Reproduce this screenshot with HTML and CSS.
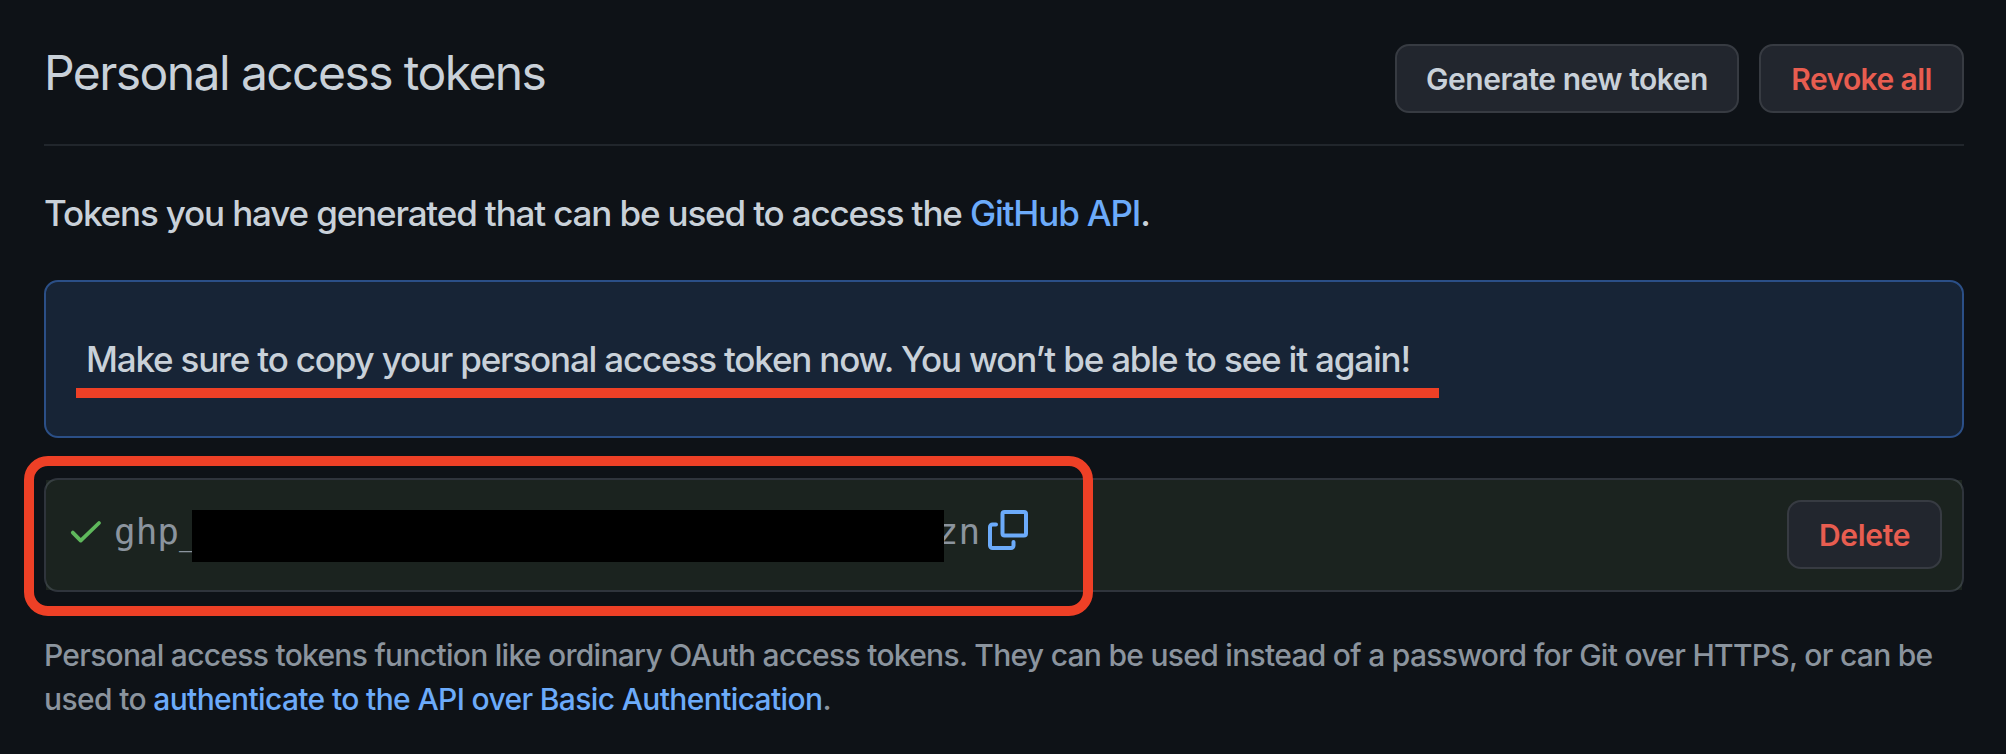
FILE: index.html
```html
<!DOCTYPE html>
<html lang="en">
<head>
<meta charset="utf-8">
<title>Personal access tokens</title>
<link rel="stylesheet" href="styles.css">
</head>
<body>
<main class="page">
  <header class="subhead">
    <h1 class="title">Personal access tokens</h1>
    <div class="actions">
      <button class="btn btn-generate">Generate new token</button>
      <button class="btn btn-danger btn-revoke">Revoke all</button>
    </div>
  </header>
  <p class="intro">Tokens you have generated that can be used to access the <a href="#">GitHub API</a>.</p>
  <section class="flash">
    <p class="flash-text">Make sure to copy your personal access token now. You won’t be able to see it again!</p>
    <div class="underline"></div>
  </section>
  <section class="token">
    <div class="token-fill">
      <svg class="check" viewBox="0 0 32 24" fill="none" stroke="#5fb85c" stroke-width="3.8" stroke-linecap="round" stroke-linejoin="round"><path d="M2.8 12.6 10.7 20.600 29 3"/></svg>
      <code class="code"><span>ghp_</span><span class="redacted"></span><span>zn</span></code>
      <svg class="copy" viewBox="0 0 40 40" fill="none" stroke="#6cabfa" stroke-width="4" stroke-linecap="round" stroke-linejoin="round"><rect x="14.5" y="2" width="23.500" height="23.500" rx="2"/><path d="M8 14.500H4.500a2.500 2.500 0 0 0-2.500 2.500V35.500A2.500 2.500 0 0 0 4.500 38H23a2.500 2.500 0 0 0 2.500-2.500V32"/></svg>
      <button class="btn btn-danger btn-delete">Delete</button>
    </div>
    <div class="highlight"></div>
  </section>
  <p class="note"><span class="note-lead">Personal access tokens function like ordinary OAuth access tokens. They can be used instead of a password for Git over HTTPS, or can be</span><br>used to <a href="#">authenticate to the API over Basic Authentication</a>.</p>
</main>
</body>
</html>
```
FILE: styles.css
```css
* { box-sizing: border-box; }
body {
  margin: 0;
  height: 754px;
  overflow: hidden;
  background: #0e1217;
  color: #c9d1d9;
  font-family: Inter, "Liberation Sans", sans-serif;
}
h1, p { margin: 0; font-weight: 450; white-space: nowrap; }
a { color: #6cabfa; text-decoration: none; }
.page { padding: 44px 42px 0 44px; }
.subhead {
  display: flex;
  justify-content: space-between;
  align-items: flex-start;
  height: 102px;
  border-bottom: 2px solid #21262c;
}
.title { font-size: 48px; font-weight: 400; line-height: 58px; letter-spacing: -1.57px; }
.actions { display: flex; gap: 20px; }
.btn {
  height: 69px;
  padding: 1px 0 0;
  border: 2px solid #373b42;
  border-radius: 14px;
  background: #22262e;
  color: #c9d1d9;
  font: 600 30px/64px Inter, "Liberation Sans", sans-serif;
  letter-spacing: -0.6px;
  white-space: nowrap;
}
.btn-danger { color: #e85d50; }
.btn-generate { width: 344px; letter-spacing: -0.46px; }
.btn-revoke { width: 205px; }
.btn-delete { width: 155px; margin: -1px 0 0 auto; letter-spacing: -0.3px; }
.intro { margin-top: 46px; font-size: 35px; line-height: 42px; letter-spacing: -1.15px; }
.flash {
  height: 158px;
  margin-top: 46px;
  padding: 56px 30px 0;
  border: 2px solid #2b4f87;
  border-radius: 14px;
  background: #172436;
}
.flash-text { padding-left: 10px; font-size: 35px; line-height: 42px; letter-spacing: -1.185px; }
.underline { width: 1363px; height: 10px; margin-top: 8px; background: #ee4026; }
.token {
  position: relative;
  height: 114px;
  margin-top: 40px;
  padding: 2px;
}
.token::after {
  content: "";
  position: absolute;
  inset: 0;
  border: 2px solid rgba(110, 118, 129, 0.35);
  border-radius: 14px;
  pointer-events: none;
}
.token-fill {
  display: flex;
  align-items: center;
  height: 110px;
  padding: 0 20px 0 24px;
  background: #1b231f;
}
.check { width: 32px; height: 24px; margin-top: -7px; }
.code {
  display: flex;
  align-items: center;
  margin-left: 12px;
  color: #8b949e;
  font: 36px/42px "DejaVu Sans Mono", "Liberation Mono", monospace;
}
.code span { padding-bottom: 7px; }
.code .redacted {
  position: relative;
  width: 752px;
  height: 52px;
  margin: 2px -7px 0 -9px;
  background: #000;
}
.copy { width: 40px; height: 40px; margin: -10px 0 0 8px; }
.highlight {
  position: absolute;
  z-index: 1;
  left: -20px;
  top: -22px;
  width: 1069px;
  height: 160px;
  border: 10px solid #ee4026;
  border-radius: 24px;
}
.note { margin-top: 41px; color: #8b949e; font-size: 30px; line-height: 44px; letter-spacing: -0.64px; }
.note-lead { letter-spacing: -0.71px; }
```
